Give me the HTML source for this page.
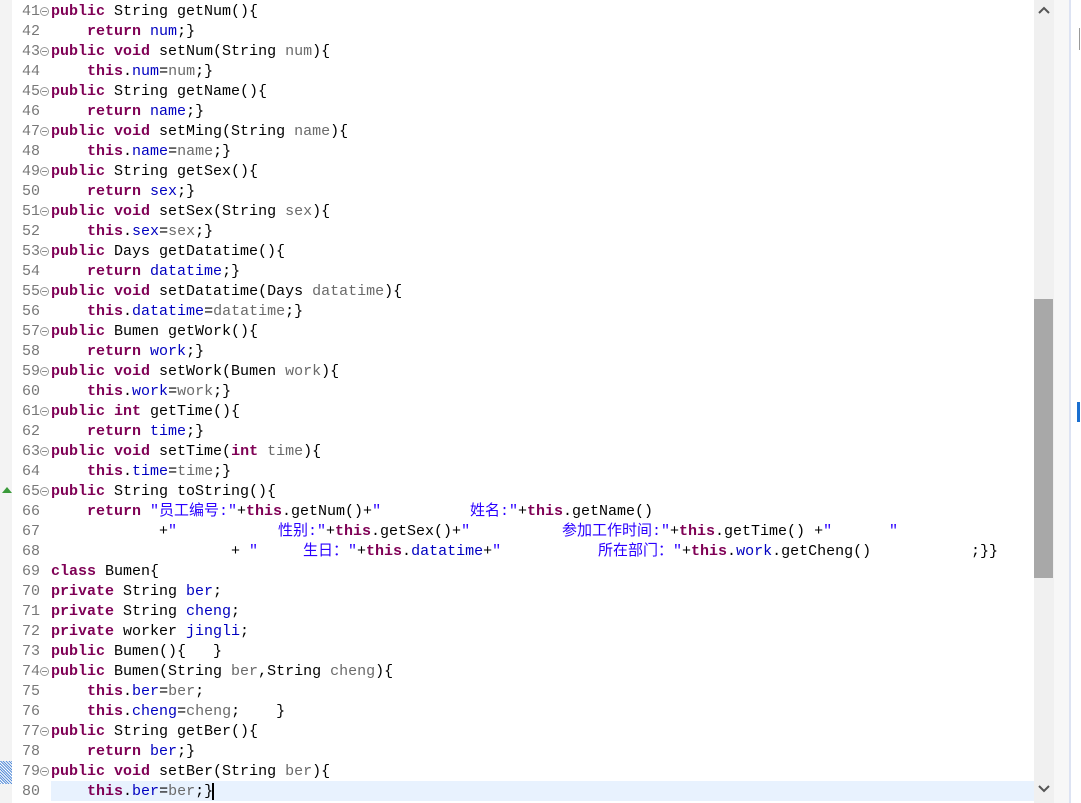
<!DOCTYPE html>
<html><head><meta charset="utf-8"><style>
html,body{margin:0;padding:0;background:#fff;width:1081px;height:803px;overflow:hidden}
body{position:relative;font-family:"Liberation Mono","Noto Sans CJK SC",monospace;font-size:15px;color:#000}
.strip{position:absolute;left:0;top:0;width:12px;height:803px;background:#f3f3f3}
.w{position:absolute;left:0;top:1px;width:1034px;height:803px}
.ln{position:absolute;left:12px;width:28px;text-align:right;color:#787878;height:20px;line-height:20px}
.cd{position:absolute;left:51px;height:20px;line-height:20px;white-space:pre}
.s{position:absolute;height:20px;line-height:20px;white-space:pre}
.k{color:#7f0055;font-weight:bold}
.f{color:#0000c0}
.t{color:#2a00ff}
.p{color:#6a6a6a}
.fold{position:absolute;left:40px;width:9px;height:9px;border:1px solid #9a9a9a;border-radius:50%;box-sizing:border-box}
.fold:after{content:"";position:absolute;left:1px;top:3px;width:5px;height:1px;background:#888}
</style></head><body>
<div class="strip"></div>
<div style="position:absolute;left:0;top:761px;width:12px;height:23px;background:repeating-linear-gradient(45deg,#5a8fd8 0 1px,#fff 1px 2px)"></div>
<div style="position:absolute;left:51px;top:781px;width:983px;height:20px;background:#e8f2fe"></div>
<div style="position:absolute;left:2px;top:487px;width:0;height:0;border-left:5px solid transparent;border-right:5px solid transparent;border-bottom:6px solid #3a9a3a"></div>
<div style="position:absolute;left:1034px;top:0;width:20px;height:803px;background:#f0f0f0"></div>
<div style="position:absolute;left:1034px;top:299px;width:19px;height:279px;background:#a8a8a8"></div>
<div style="position:absolute;left:1054px;top:0;width:15px;height:803px;background:#f7f7f7"></div>
<div style="position:absolute;left:1069px;top:0;width:2px;height:803px;background:#dde3f3"></div>
<svg style="position:absolute;left:1038px;top:5px" width="12" height="10"><path d="M1 8 L6 3 L11 8" stroke="#555" stroke-width="2" fill="none"/></svg>
<svg style="position:absolute;left:1038px;top:784px" width="12" height="10"><path d="M1 2 L6 7 L11 2" stroke="#555" stroke-width="2" fill="none"/></svg>
<div style="position:absolute;left:1079px;top:28px;width:1px;height:22px;background:#999"></div>
<div style="position:absolute;left:1077px;top:402px;width:3px;height:20px;background:#1a6fd0"></div>
<div class="w">
<div class="ln" style="top:1px">41</div><div class="fold" style="top:6px"></div><div class="cd" style="top:1px"><span class="k">public</span> String getNum(){</div>
<div class="ln" style="top:21px">42</div><div class="cd" style="top:21px">    <span class="k">return</span> <span class="f">num</span>;}</div>
<div class="ln" style="top:41px">43</div><div class="fold" style="top:46px"></div><div class="cd" style="top:41px"><span class="k">public</span> <span class="k">void</span> setNum(String <span class="p">num</span>){</div>
<div class="ln" style="top:61px">44</div><div class="cd" style="top:61px">    <span class="k">this</span>.<span class="f">num</span>=<span class="p">num</span>;}</div>
<div class="ln" style="top:81px">45</div><div class="fold" style="top:86px"></div><div class="cd" style="top:81px"><span class="k">public</span> String getName(){</div>
<div class="ln" style="top:101px">46</div><div class="cd" style="top:101px">    <span class="k">return</span> <span class="f">name</span>;}</div>
<div class="ln" style="top:121px">47</div><div class="fold" style="top:126px"></div><div class="cd" style="top:121px"><span class="k">public</span> <span class="k">void</span> setMing(String <span class="p">name</span>){</div>
<div class="ln" style="top:141px">48</div><div class="cd" style="top:141px">    <span class="k">this</span>.<span class="f">name</span>=<span class="p">name</span>;}</div>
<div class="ln" style="top:161px">49</div><div class="fold" style="top:166px"></div><div class="cd" style="top:161px"><span class="k">public</span> String getSex(){</div>
<div class="ln" style="top:181px">50</div><div class="cd" style="top:181px">    <span class="k">return</span> <span class="f">sex</span>;}</div>
<div class="ln" style="top:201px">51</div><div class="fold" style="top:206px"></div><div class="cd" style="top:201px"><span class="k">public</span> <span class="k">void</span> setSex(String <span class="p">sex</span>){</div>
<div class="ln" style="top:221px">52</div><div class="cd" style="top:221px">    <span class="k">this</span>.<span class="f">sex</span>=<span class="p">sex</span>;}</div>
<div class="ln" style="top:241px">53</div><div class="fold" style="top:246px"></div><div class="cd" style="top:241px"><span class="k">public</span> Days getDatatime(){</div>
<div class="ln" style="top:261px">54</div><div class="cd" style="top:261px">    <span class="k">return</span> <span class="f">datatime</span>;}</div>
<div class="ln" style="top:281px">55</div><div class="fold" style="top:286px"></div><div class="cd" style="top:281px"><span class="k">public</span> <span class="k">void</span> setDatatime(Days <span class="p">datatime</span>){</div>
<div class="ln" style="top:301px">56</div><div class="cd" style="top:301px">    <span class="k">this</span>.<span class="f">datatime</span>=<span class="p">datatime</span>;}</div>
<div class="ln" style="top:321px">57</div><div class="fold" style="top:326px"></div><div class="cd" style="top:321px"><span class="k">public</span> Bumen getWork(){</div>
<div class="ln" style="top:341px">58</div><div class="cd" style="top:341px">    <span class="k">return</span> <span class="f">work</span>;}</div>
<div class="ln" style="top:361px">59</div><div class="fold" style="top:366px"></div><div class="cd" style="top:361px"><span class="k">public</span> <span class="k">void</span> setWork(Bumen <span class="p">work</span>){</div>
<div class="ln" style="top:381px">60</div><div class="cd" style="top:381px">    <span class="k">this</span>.<span class="f">work</span>=<span class="p">work</span>;}</div>
<div class="ln" style="top:401px">61</div><div class="fold" style="top:406px"></div><div class="cd" style="top:401px"><span class="k">public</span> <span class="k">int</span> getTime(){</div>
<div class="ln" style="top:421px">62</div><div class="cd" style="top:421px">    <span class="k">return</span> <span class="f">time</span>;}</div>
<div class="ln" style="top:441px">63</div><div class="fold" style="top:446px"></div><div class="cd" style="top:441px"><span class="k">public</span> <span class="k">void</span> setTime(<span class="k">int</span> <span class="p">time</span>){</div>
<div class="ln" style="top:461px">64</div><div class="cd" style="top:461px">    <span class="k">this</span>.<span class="f">time</span>=<span class="p">time</span>;}</div>
<div class="ln" style="top:481px">65</div><div class="fold" style="top:486px"></div><div class="cd" style="top:481px"><span class="k">public</span> String toString(){</div>
<div class="ln" style="top:501px">66</div>
<div class="s" style="top:501px;left:87px"><span class="k">return</span></div>
<div class="s" style="top:501px;left:150px"><span class="t">"员工编号:"</span>+<span class="k">this</span>.getNum()+<span class="t">"</span></div>
<div class="s" style="top:501px;left:470px"><span class="t">姓名:"</span>+<span class="k">this</span>.getName()</div>
<div class="ln" style="top:521px">67</div>
<div class="s" style="top:521px;left:159px">+<span class="t">"</span></div>
<div class="s" style="top:521px;left:278px"><span class="t">性别:"</span>+<span class="k">this</span>.getSex()+<span class="t">"</span></div>
<div class="s" style="top:521px;left:562px"><span class="t">参加工作时间:"</span>+<span class="k">this</span>.getTime() +<span class="t">"</span></div>
<div class="s" style="top:521px;left:889px"><span class="t">"</span></div>
<div class="ln" style="top:541px">68</div>
<div class="s" style="top:541px;left:231px">+ <span class="t">"</span></div>
<div class="s" style="top:541px;left:303px"><span class="t">生日："</span>+<span class="k">this</span>.<span class="f">datatime</span>+<span class="t">"</span></div>
<div class="s" style="top:541px;left:598px"><span class="t">所在部门："</span>+<span class="k">this</span>.<span class="f">work</span>.getCheng()</div>
<div class="s" style="top:541px;left:971px">;}}</div>
<div class="ln" style="top:561px">69</div><div class="cd" style="top:561px"><span class="k">class</span> Bumen{</div>
<div class="ln" style="top:581px">70</div><div class="cd" style="top:581px"><span class="k">private</span> String <span class="f">ber</span>;</div>
<div class="ln" style="top:601px">71</div><div class="cd" style="top:601px"><span class="k">private</span> String <span class="f">cheng</span>;</div>
<div class="ln" style="top:621px">72</div><div class="cd" style="top:621px"><span class="k">private</span> worker <span class="f">jingli</span>;</div>
<div class="ln" style="top:641px">73</div><div class="cd" style="top:641px"><span class="k">public</span> Bumen(){   }</div>
<div class="ln" style="top:661px">74</div><div class="fold" style="top:666px"></div><div class="cd" style="top:661px"><span class="k">public</span> Bumen(String <span class="p">ber</span>,String <span class="p">cheng</span>){</div>
<div class="ln" style="top:681px">75</div><div class="cd" style="top:681px">    <span class="k">this</span>.<span class="f">ber</span>=<span class="p">ber</span>;</div>
<div class="ln" style="top:701px">76</div><div class="cd" style="top:701px">    <span class="k">this</span>.<span class="f">cheng</span>=<span class="p">cheng</span>;    }</div>
<div class="ln" style="top:721px">77</div><div class="fold" style="top:726px"></div><div class="cd" style="top:721px"><span class="k">public</span> String getBer(){</div>
<div class="ln" style="top:741px">78</div><div class="cd" style="top:741px">    <span class="k">return</span> <span class="f">ber</span>;}</div>
<div class="ln" style="top:761px">79</div><div class="fold" style="top:766px"></div><div class="cd" style="top:761px"><span class="k">public</span> <span class="k">void</span> setBer(String <span class="p">ber</span>){</div>
<div class="ln" style="top:781px">80</div><div class="cd" style="top:781px">    <span class="k">this</span>.<span class="f">ber</span>=<span class="p">ber</span>;}</div>
</div>
<div style="position:absolute;left:212px;top:783px;width:2px;height:17px;background:#000"></div>
</body></html>
